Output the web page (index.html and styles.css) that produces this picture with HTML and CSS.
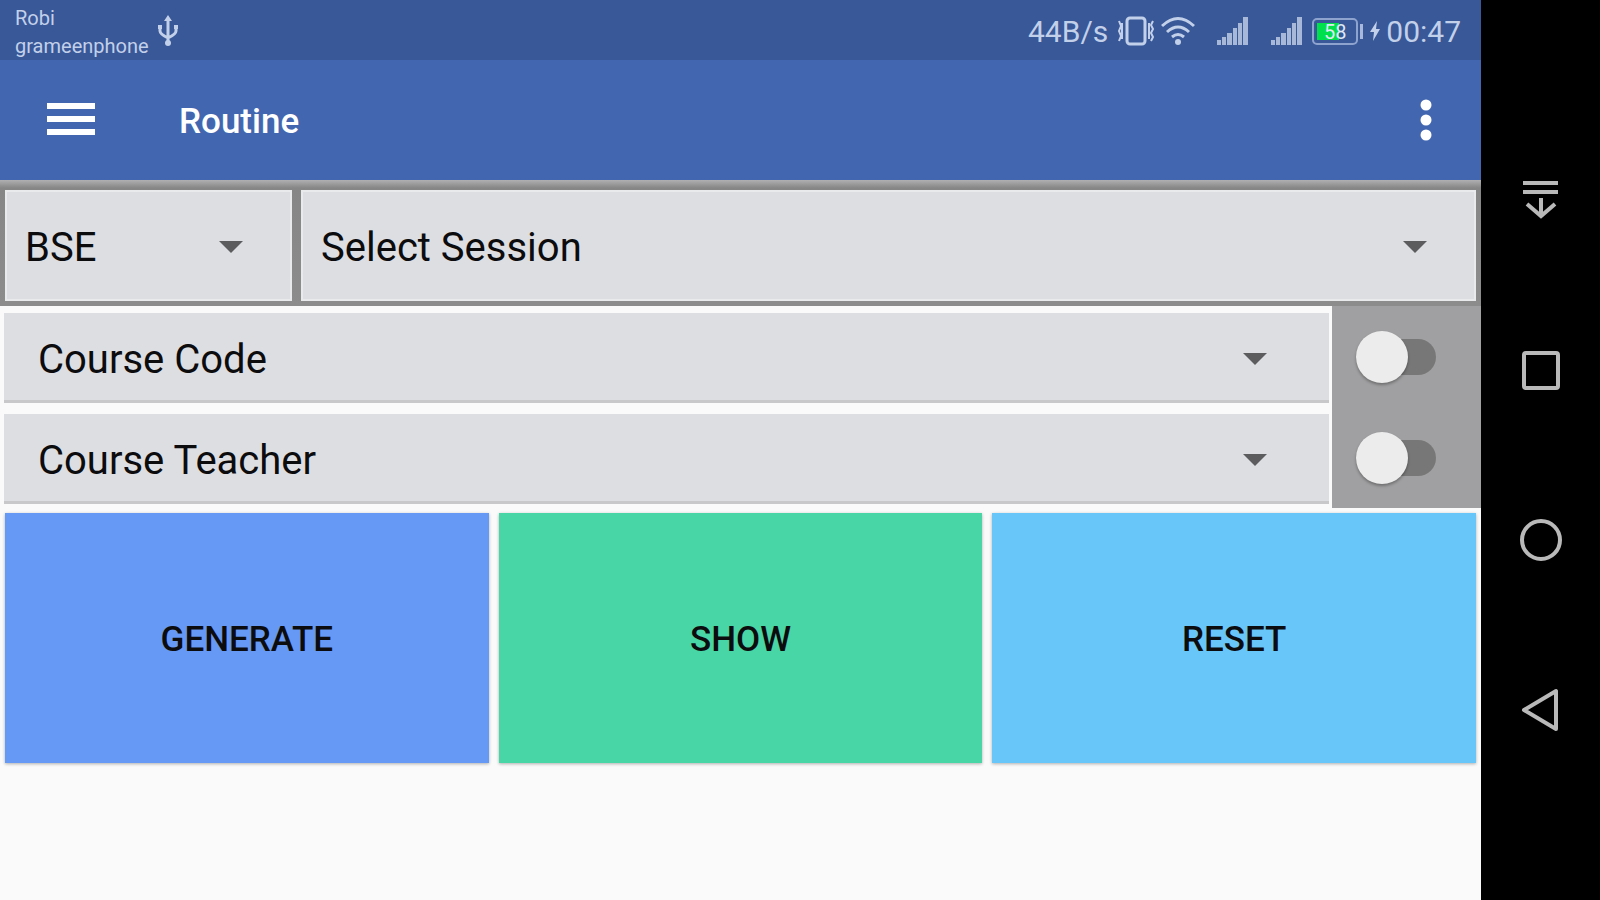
FILE: index.html
```
<!DOCTYPE html>
<html lang="en">
<head>
    <meta charset="UTF-8">
    <meta name="viewport" content="width=device-width, initial-scale=1.0">
    <title>Routine</title>
    <link rel="stylesheet" href="styles.css">
</head>
<body>
    <div class="screen">
        <!-- Status bar -->
        <div class="status-bar">
            <div class="carriers">
                <span>Robi</span>
                <span>grameenphone</span>
            </div>
            <svg class="usb-icon" width="22" height="32" viewBox="0 0 22 32" fill="none" stroke="currentColor" stroke-width="3">
                <path d="M11 4v25M3 12v4q0 3 8 7M19 12v4q0 3-8 7"></path>
                <path d="M11 0l4 6h-8zM1 10h4v4h-4zM17 10h4v4h-4z" fill="currentColor" stroke="none"></path>
                <circle cx="11" cy="28" r="3" fill="currentColor" stroke="none"></circle>
            </svg>
            <div class="status-right">
                <span class="net-speed">44B/s</span>
                <svg class="vibrate-icon" width="38" height="30" viewBox="0 0 38 30" fill="none" stroke="currentColor" stroke-width="2">
                    <rect x="10" y="2" width="18" height="26" rx="3" stroke-width="3"></rect>
                    <path d="M2 5l2 5-2 5 2 5-2 5M5 7v16M32 7v16M36 5l-2 4 2 4-2 4 2 4-2 4"></path>
                </svg>
                <svg class="wifi-icon" width="34" height="30" viewBox="0 0 34 30" fill="none" stroke="currentColor" stroke-width="3">
                    <path d="M1 10q16-15 32 0M6 16q11-10 22 0M11 21q6-5 12 0"></path>
                    <circle cx="17" cy="26" r="3" fill="currentColor" stroke="none"></circle>
                </svg>
                <svg class="signal-icon" width="32" height="30" viewBox="0 0 32 30" fill="currentColor">
                    <path d="M0 24h4v5h-4zM5 21h4v8h-4zM10 17h5v12h-5zM16 12h4v17h-4zM21 7h4v22h-4zM26 1h5v28h-5z"></path>
                </svg>
                <svg class="signal-icon" width="32" height="30" viewBox="0 0 32 30" fill="currentColor">
                    <path d="M0 24h4v5h-4zM5 21h4v8h-4zM10 17h5v12h-5zM16 12h4v17h-4zM21 7h4v22h-4zM26 1h5v28h-5z"></path>
                </svg>
                <div class="battery">
                    <span class="battery-level">58</span>
                </div>
                <svg class="bolt-icon" width="10" height="22" viewBox="0 0 10 22" fill="currentColor">
                    <path d="M7 1l-7 11h4l-1 9 7-12h-4z"></path>
                </svg>
                <span class="clock">00:47</span>
            </div>
        </div>

        <!-- App bar -->
        <header class="app-bar">
            <button class="icon-button" type="button" aria-label="Open menu">
                <svg width="48" height="34" viewBox="0 0 48 34" fill="currentColor">
                    <path d="M0 0h48v6h-48zM0 13h48v6h-48zM0 26h48v6h-48z"></path>
                </svg>
            </button>
            <h1 class="title">Routine</h1>
            <button class="icon-button" type="button" aria-label="More options">
                <svg width="12" height="42" viewBox="0 0 12 42" fill="currentColor">
                    <circle cx="6" cy="6" r="5.5"></circle>
                    <circle cx="6" cy="21" r="5.5"></circle>
                    <circle cx="6" cy="36" r="5.5"></circle>
                </svg>
            </button>
        </header>

        <main>
            <div class="session-row">
                <div class="spinner program">
                    <select aria-label="Program"><option>BSE</option></select>
                    <svg class="caret" width="24" height="12" viewBox="0 0 24 12"><path d="M0 0h24l-12 12z"></path></svg>
                </div>
                <div class="spinner session">
                    <select aria-label="Session"><option>Select Session</option></select>
                    <svg class="caret" width="24" height="12" viewBox="0 0 24 12"><path d="M0 0h24l-12 12z"></path></svg>
                </div>
            </div>

            <div class="course-row">
                <div class="spinner course">
                    <select aria-label="Course code"><option>Course Code</option></select>
                    <svg class="caret" width="24" height="12" viewBox="0 0 24 12"><path d="M0 0h24l-12 12z"></path></svg>
                </div>
                <div class="switch-cell">
                    <input class="switch" type="checkbox" role="switch" aria-label="Filter by course code">
                </div>
            </div>
            <div class="course-row">
                <div class="spinner course">
                    <select aria-label="Course teacher"><option>Course Teacher</option></select>
                    <svg class="caret" width="24" height="12" viewBox="0 0 24 12"><path d="M0 0h24l-12 12z"></path></svg>
                </div>
                <div class="switch-cell">
                    <input class="switch" type="checkbox" role="switch" aria-label="Filter by course teacher">
                </div>
            </div>

            <div class="actions">
                <button class="action generate" type="button">GENERATE</button>
                <button class="action show" type="button">SHOW</button>
                <button class="action reset" type="button">RESET</button>
            </div>
        </main>
    </div>

    <!-- System navigation keys -->
    <nav class="nav-keys" aria-label="System">
        <button class="icon-button" type="button" aria-label="Notifications">
            <svg width="44" height="44" viewBox="0 0 44 44" fill="none" stroke="currentColor" stroke-width="4">
                <path d="M4 5h35M4 14h35"></path>
                <path d="M22 20v18M8 26l14 12 14-12"></path>
            </svg>
        </button>
        <button class="icon-button" type="button" aria-label="Recent apps">
            <svg width="44" height="44" viewBox="0 0 44 44" fill="none" stroke="currentColor" stroke-width="4">
                <rect x="5" y="5" width="34" height="35" rx="2"></rect>
            </svg>
        </button>
        <button class="icon-button" type="button" aria-label="Home">
            <svg width="44" height="44" viewBox="0 0 44 44" fill="none" stroke="currentColor" stroke-width="4">
                <circle cx="22" cy="22" r="19"></circle>
            </svg>
        </button>
        <button class="icon-button" type="button" aria-label="Back">
            <svg width="44" height="44" viewBox="0 0 44 44" fill="none" stroke="currentColor" stroke-width="4" stroke-linejoin="round">
                <path d="M37 3v38l-32-19z"></path>
            </svg>
        </button>
    </nav>
</body>
</html>
```
FILE: styles.css
```
* {
    box-sizing: border-box;
}

body {
    margin: 0;
    min-height: 100vh;
    display: flex;
    background: #fafafa;
    color: #0c0c0e;
    font-family: Roboto, sans-serif;
}

svg {
    display: block;
}

.screen {
    flex: 1;
    min-width: 0;
}

/* Status bar */
.status-bar {
    display: flex;
    align-items: center;
    height: 60px;
    padding: 2px 20px 0 15px;
    background: #385898;
    color: #c3d0ea;
}

.carriers {
    display: flex;
    flex-direction: column;
    padding-top: 2px;
    font-size: 20px;
    line-height: 28px;
}

.usb-icon {
    margin-left: 8px;
}

.status-right {
    display: flex;
    align-items: center;
    margin-left: auto;
    font-size: 30px;
    line-height: 36px;
}

.net-speed,
.clock {
    padding-top: 2px;
}

.vibrate-icon {
    margin-left: 9px;
}

.wifi-icon {
    margin-left: 6px;
}

.signal-icon {
    margin-left: 22px;
    opacity: 0.8;
}

.battery {
    position: relative;
    width: 46px;
    height: 27px;
    margin: 0 12px 0 9px;
    padding: 2px;
    border: 2px solid #8fa3cf;
    border-radius: 5px;
    background: linear-gradient(#00e04c, #00e04c) 3px 3px / 22px 17px no-repeat;
}

.battery::after {
    content: "";
    position: absolute;
    top: 4px;
    right: -7px;
    width: 3px;
    height: 15px;
    background: #a9b9dc;
}

.battery-level {
    display: block;
    color: #dfe8f5;
    font-size: 20px;
    line-height: 20px;
    text-align: center;
}

.clock {
    margin-left: 6px;
}

/* App bar */
.app-bar {
    display: flex;
    align-items: center;
    height: 120px;
    padding: 0 49px 0 47px;
    background: #4267b0;
    color: #ffffff;
}

.title {
    flex: 1;
    margin: 0;
    padding: 4px 0 0 84px;
    font-size: 35px;
    font-weight: 500;
    line-height: 44px;
}

.icon-button {
    padding: 0;
    border: none;
    background: none;
    color: inherit;
    cursor: pointer;
}

/* Spinners */
.spinner {
    display: grid;
    align-items: center;
    background: #dddee2;
}

.spinner select,
.spinner .caret {
    grid-area: 1 / 1;
}

.spinner select {
    appearance: none;
    width: 100%;
    height: 100%;
    padding: 2px 80px 0 20px;
    border: none;
    border-radius: 0;
    background: none;
    color: inherit;
    font-family: inherit;
    font-size: 40px;
}

.caret {
    justify-self: end;
    margin-right: 49px;
    fill: #5c5c5f;
    pointer-events: none;
}

.session-row {
    display: flex;
    gap: 9px;
    padding: 10px 5px 5px;
    background: linear-gradient(#b0b0b2, #868686 8px, #8c8c8d);
}

.session-row .spinner {
    height: 111px;
    padding-top: 2px;
    border: 2px solid #e9eaec;
}

.session-row .caret {
    margin-right: 47px;
}

.session-row select {
    padding-left: 18px;
}

.program {
    flex: 0 0 287px;
}

.session {
    flex: 1;
}

.course-row {
    display: flex;
    height: 101px;
}

.course {
    flex: 1;
    margin: 7px 3px 4px 4px;
    padding-top: 4px;
    border-bottom: 3px solid #c8c8ca;
}

.course select {
    padding-left: 34px;
}

.course .caret {
    margin-right: 62px;
}

/* Switches */
.switch-cell {
    display: flex;
    align-items: center;
    width: 149px;
    padding-left: 24px;
    background: #a0a0a2;
}

.switch {
    appearance: none;
    position: relative;
    width: 80px;
    height: 36px;
    margin: 0;
    border-radius: 18px;
    background: #777777;
    cursor: pointer;
}

.switch::before {
    content: "";
    position: absolute;
    top: -8px;
    left: 0;
    width: 52px;
    height: 52px;
    border-radius: 50%;
    background: #ececec;
    box-shadow: 0 2px 3px rgba(0, 0, 0, 0.3);
}

.switch:checked::before {
    left: 28px;
}

/* Action buttons */
.actions {
    display: grid;
    grid-template-columns: repeat(3, 1fr);
    gap: 10px;
    padding: 5px;
}

.action {
    height: 250px;
    padding-top: 3px;
    border: none;
    box-shadow: 0 1px 3px rgba(0, 0, 0, 0.3);
    color: inherit;
    font-family: inherit;
    font-size: 35px;
    font-weight: 500;
    cursor: pointer;
}

.generate {
    background: #6699f5;
}

.show {
    background: #48d6a6;
}

.reset {
    background: #69c6f9;
}

/* System navigation keys */
.nav-keys {
    display: flex;
    flex-direction: column;
    align-items: center;
    justify-content: center;
    gap: 126px;
    width: 119px;
    padding-top: 10px;
    background: #000000;
    color: #b9b9b9;
}
```
